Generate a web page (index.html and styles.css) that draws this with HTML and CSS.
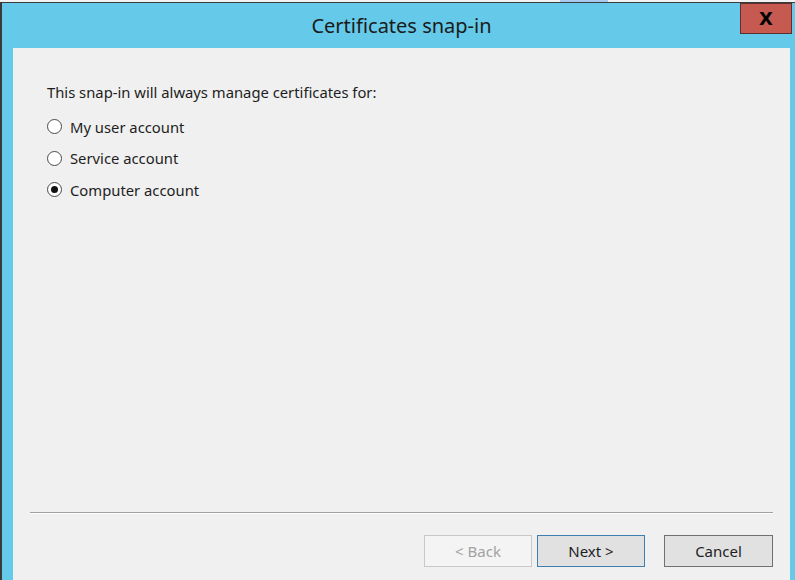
FILE: index.html
```html
<!DOCTYPE html>
<html lang="en">
<head>
    <meta charset="UTF-8">
    <title>Certificates snap-in</title>
    <link rel="stylesheet" href="styles.css">
</head>
<body>
    <div class="topStrip"><div class="stripTab"></div></div>
    <div class="window">
        <div class="titleBar">
            <span class="title">Certificates snap-in</span>
            <button class="closeButton">X</button>
        </div>
        <div class="frame">
            <div class="content">
                <div class="pageBody">
                    <p class="prompt">This snap-in will always manage certificates for:</p>
                    <label class="option"><span class="radio"></span>My user account</label>
                    <label class="option"><span class="radio"></span>Service account</label>
                    <label class="option"><span class="radio checked"></span>Computer account</label>
                </div>
                <div class="separator"></div>
                <div class="buttonRow">
                    <button class="btn disabled">&lt; Back</button>
                    <button class="btn default">Next &gt;</button>
                    <button class="btn cancel">Cancel</button>
                </div>
            </div>
        </div>
    </div>
</body>
</html>
```

FILE: styles.css
```css
body, html {
    margin: 0;
    padding: 0;
    width: 100%;
    height: 100%;
    overflow: hidden;
    background-color: #f4f4f4;
    font-family: "Noto Sans", "Liberation Sans", sans-serif;
}
.topStrip {
    height: 2px;
    background-color: #f2f2f2;
    position: relative;
}
.stripTab {
    position: absolute;
    left: 560px;
    top: 0;
    width: 48px;
    height: 2px;
    background-color: #a9c8f0;
}
.window {
    height: 578px;
    border-top: 1px solid #3a3a3a;
    border-left: 2px solid #3a3a3a;
    background-color: #65c9e9;
    display: flex;
    flex-direction: column;
}
.titleBar {
    height: 45px;
    position: relative;
    display: flex;
    justify-content: center;
    align-items: center;
}
.title {
    font-size: 20px;
    color: #1b1b1b;
    margin-left: 6px;
}
.closeButton {
    position: absolute;
    top: 0;
    right: 3px;
    width: 52px;
    height: 31px;
    box-sizing: border-box;
    background-color: #c65a50;
    border: 1px solid #5b2f2c;
    font-family: "DejaVu Sans", sans-serif;
    font-weight: bold;
    font-size: 18px;
    color: #000;
    padding: 0;
}
.frame {
    flex: 1;
    padding: 0 5px 0 11px;
    display: flex;
}
.content {
    flex: 1;
    background-color: #f0f0f0;
    display: flex;
    flex-direction: column;
}
.pageBody {
    flex: 1;
    padding: 34px 0 0 34px;
    font-size: 14.8px;
    color: #1e1e1e;
}
.prompt {
    margin: 0 0 9px 0;
}
.option {
    display: flex;
    align-items: center;
    gap: 8px;
    height: 31.5px;
}
.radio {
    width: 13px;
    height: 13px;
    border: 1px solid #4a4a4a;
    border-radius: 50%;
    background-color: #fff;
    display: flex;
    justify-content: center;
    align-items: center;
}
.radio.checked::after {
    content: "";
    width: 7px;
    height: 7px;
    border-radius: 50%;
    background-color: #111;
}
.separator {
    margin: 0 17px 0 17px;
    height: 1px;
    background-color: #a0a0a0;
    border-bottom: 1px solid #ffffff;
}
.buttonRow {
    display: flex;
    justify-content: flex-end;
    gap: 5px;
    padding: 21px 17px 14px 0;
}
.btn {
    width: 108px;
    height: 32px;
    box-sizing: border-box;
    font-family: "Noto Sans", "Liberation Sans", sans-serif;
    font-size: 15px;
    color: #1e1e1e;
    background-color: #e1e1e1;
    border: 1px solid #adadad;
    padding: 0;
}
.btn.disabled {
    background-color: #f4f4f4;
    border-color: #c8c8c8;
    color: #a2a2a2;
}
.btn.default {
    border: 1px solid #3c7fb1;
    background-color: #e1e1e1;
}
.btn.cancel {
    width: 109px;
    margin-left: 14px;
    border: 1px solid #707070;
}
```
